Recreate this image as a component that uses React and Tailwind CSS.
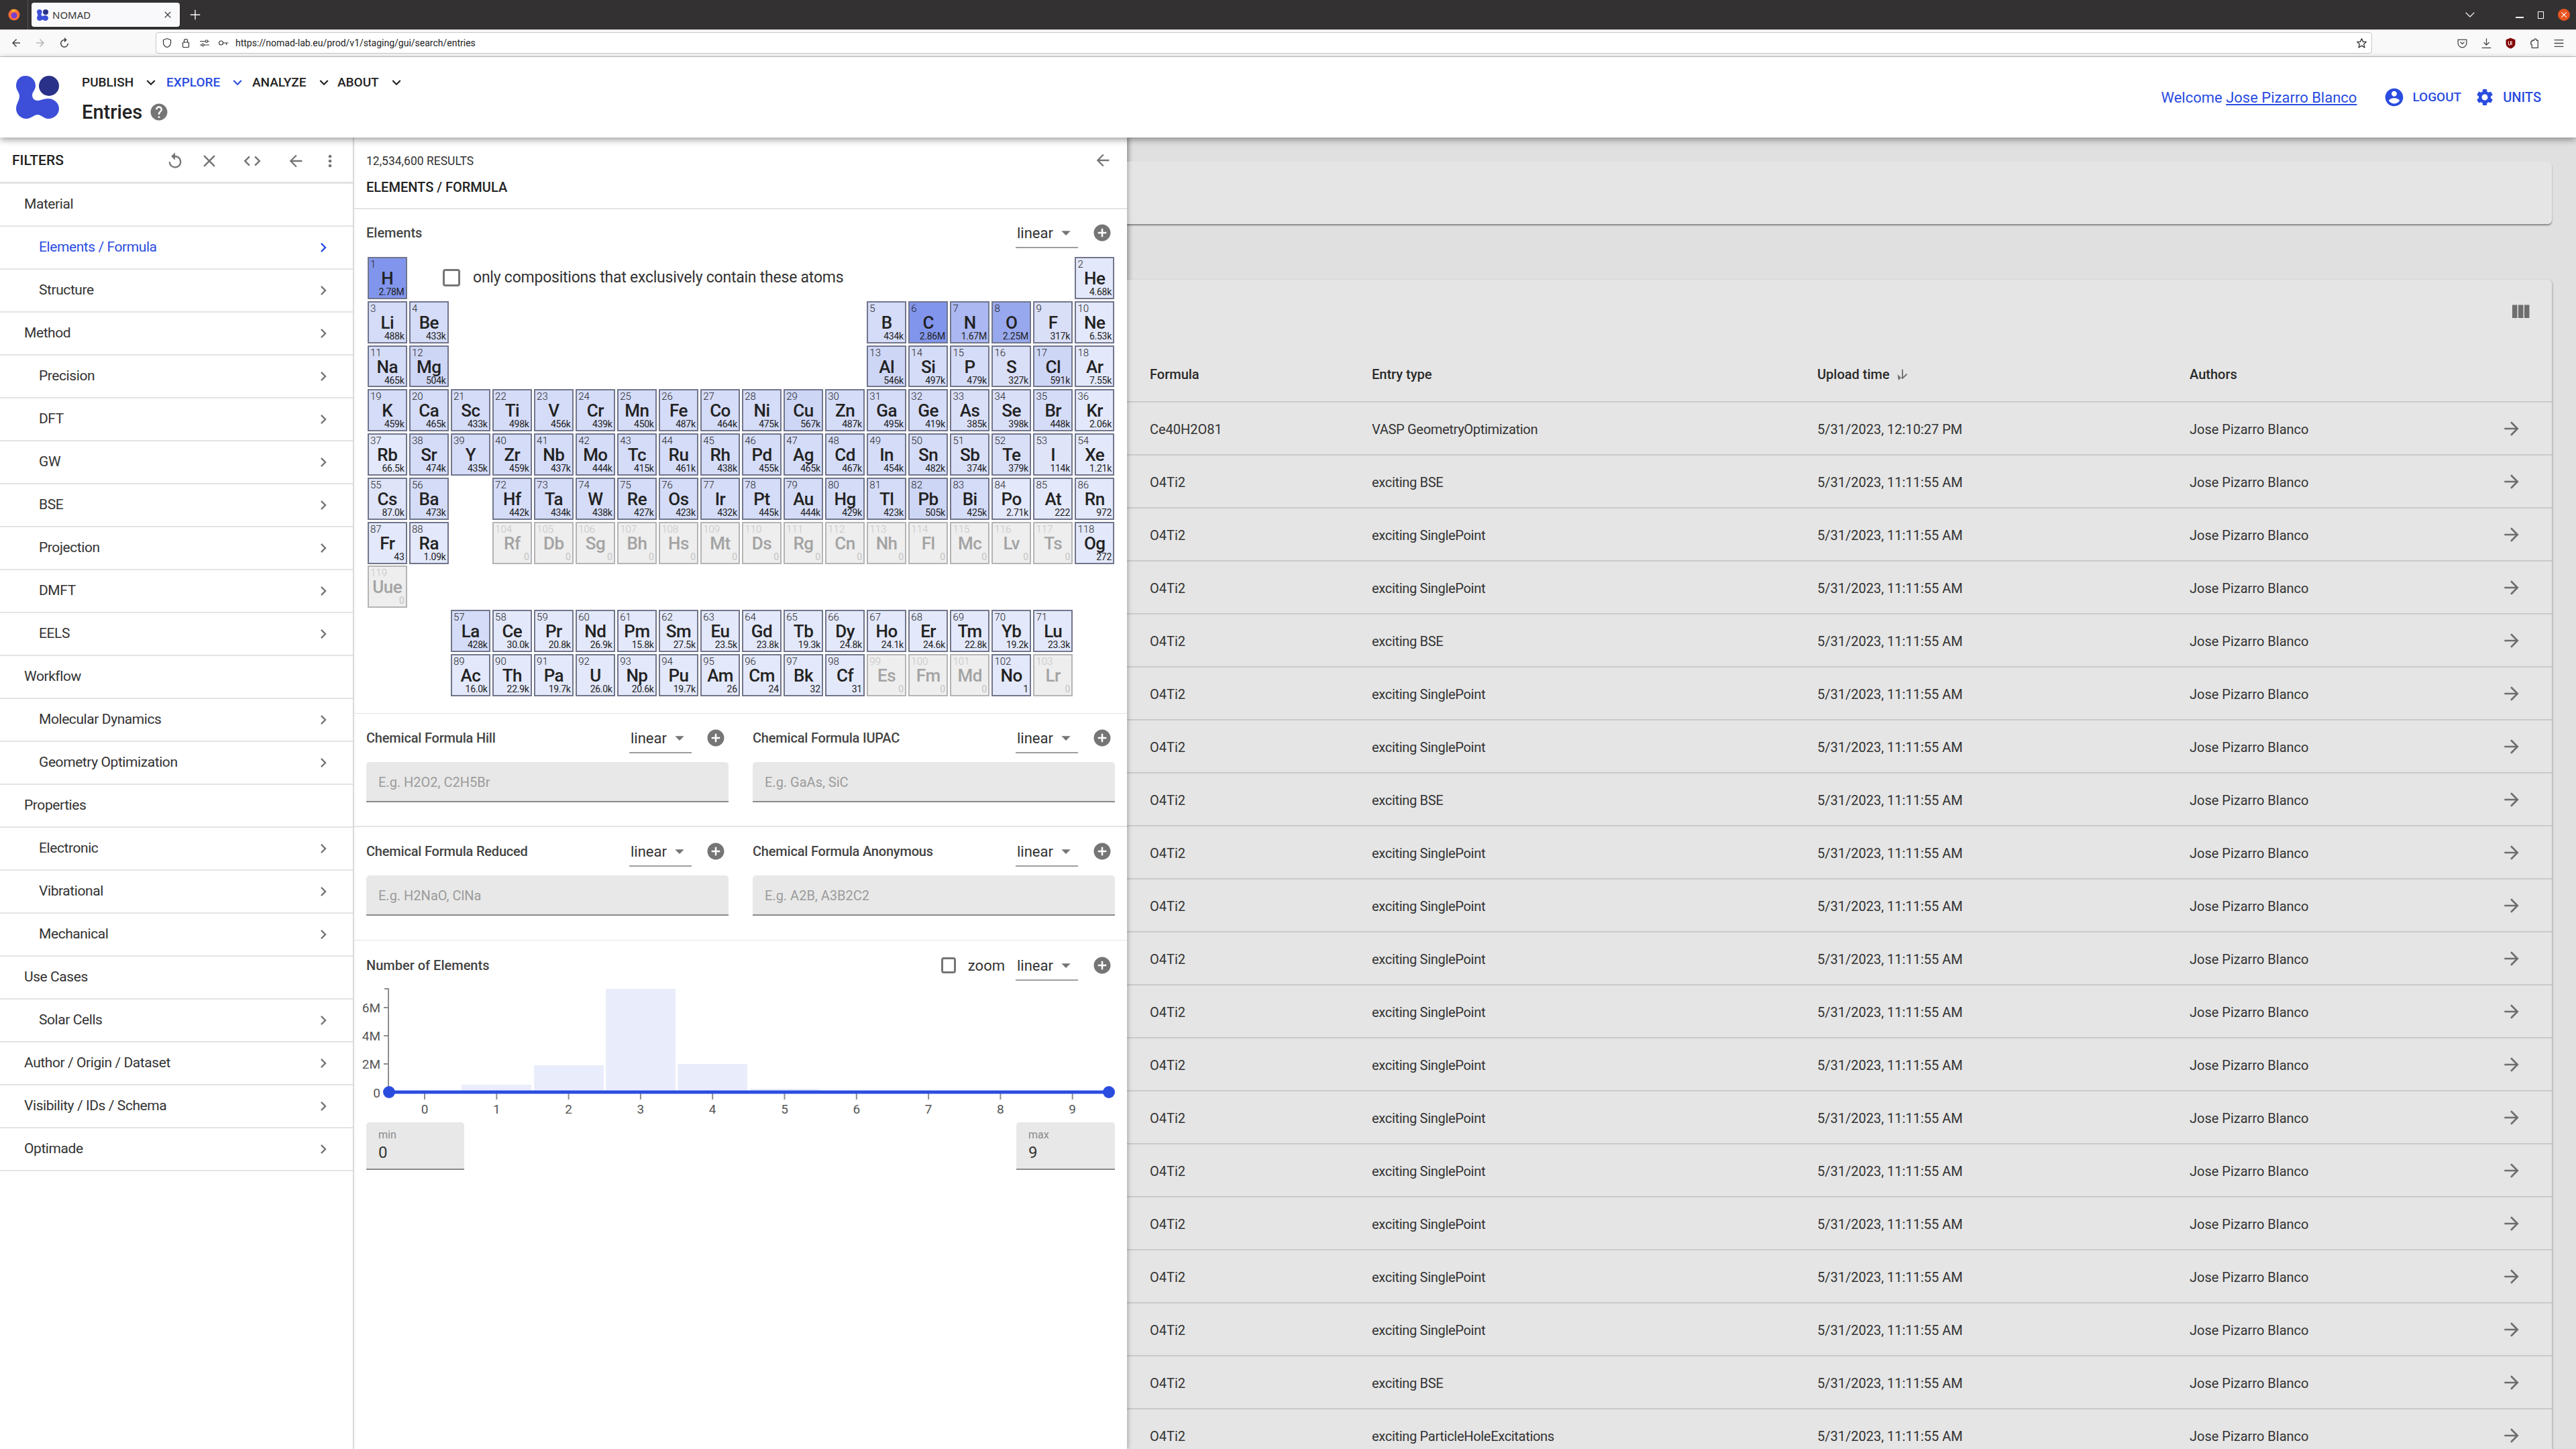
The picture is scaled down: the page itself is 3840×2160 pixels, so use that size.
import React from "react";

const P = {
  replay: "M12 5V1L7 6l5 5V7c3.31 0 6 2.69 6 6s-2.69 6-6 6-6-2.69-6-6H4c0 4.42 3.58 8 8 8s8-3.58 8-8-3.58-8-8-8z",
  clear: "M19 6.41L17.59 5 12 10.59 6.41 5 5 6.41 10.59 12 5 17.59 6.41 19 12 13.41 17.59 19 19 17.59 13.41 12z",
  code: "M9.4 16.6L4.8 12l4.6-4.6L8 6l-6 6 6 6 1.4-1.4zm5.2 0l4.6-4.6-4.6-4.6L16 6l6 6-6 6-1.4-1.4z",
  back: "M20 11H7.83l5.59-5.59L12 4l-8 8 8 8 1.41-1.41L7.83 13H20v-2z",
  forward: "M12 4l-1.41 1.41L16.17 11H4v2h12.17l-5.58 5.59L12 20l8-8z",
  more: "M12 8c1.1 0 2-.9 2-2s-.9-2-2-2-2 .9-2 2 .9 2 2 2zm0 2c-1.1 0-2 .9-2 2s.9 2 2 2 2-.9 2-2-.9-2-2-2zm0 6c-1.1 0-2 .9-2 2s.9 2 2 2 2-.9 2-2-.9-2-2-2z",
  chevron: "M10 6L8.59 7.41 13.17 12l-4.58 4.59L10 18l6-6z",
  expand: "M16.59 8.59L12 13.17 7.41 8.59 6 10l6 6 6-6z",
  drop: "M7 10l5 5 5-5z",
  add: "M12 2C6.48 2 2 6.48 2 12s4.48 10 10 10 10-4.48 10-10S17.52 2 12 2zm5 11h-4v4h-2v-4H7v-2h4V7h2v4h4v2z",
  help: "M12 2C6.48 2 2 6.48 2 12s4.48 10 10 10 10-4.48 10-10S17.52 2 12 2zm1 17h-2v-2h2v2zm2.07-7.75l-.9.92C13.45 12.9 13 13.5 13 15h-2v-.5c0-1.1.45-2.1 1.17-2.83l1.24-1.26c.37-.36.59-.86.59-1.41 0-1.1-.9-2-2-2s-2 .9-2 2H8c0-2.21 1.79-4 4-4s4 1.79 4 4c0 .88-.36 1.68-.93 2.25z",
  account: "M12 2C6.48 2 2 6.48 2 12s4.48 10 10 10 10-4.48 10-10S17.52 2 12 2zm0 3c1.66 0 3 1.34 3 3s-1.34 3-3 3-3-1.34-3-3 1.34-3 3-3zm0 14.2c-2.5 0-4.71-1.28-6-3.22.03-1.99 4-3.08 6-3.08 1.99 0 5.97 1.09 6 3.08-1.29 1.94-3.5 3.22-6 3.22z",
  settings: "M19.14 12.94c.04-.3.06-.61.06-.94 0-.32-.02-.64-.07-.94l2.03-1.58c.18-.14.23-.41.12-.61l-1.92-3.32c-.12-.22-.37-.29-.59-.22l-2.39.96c-.5-.38-1.03-.7-1.62-.94l-.36-2.54c-.04-.24-.24-.41-.48-.41h-3.84c-.24 0-.43.17-.47.41l-.36 2.54c-.59.24-1.13.57-1.62.94l-2.39-.96c-.22-.08-.47 0-.59.22L2.74 8.87c-.12.21-.08.47.12.61l2.03 1.58c-.05.3-.09.63-.09.94s.02.64.07.94l-2.03 1.58c-.18.14-.23.41-.12.61l1.92 3.32c.12.22.37.29.59.22l2.39-.96c.5.38 1.03.7 1.62.94l.36 2.54c.05.24.24.41.48.41h3.84c.24 0 .44-.17.47-.41l.36-2.54c.59-.24 1.13-.56 1.62-.94l2.39.96c.22.08.47 0 .59-.22l1.92-3.32c.12-.22.07-.47-.12-.61l-2.01-1.58zM12 15.6c-1.98 0-3.6-1.62-3.6-3.6s1.62-3.6 3.6-3.6 3.6 1.62 3.6 3.6-1.62 3.6-3.6 3.6z",
  columns: "M10 18h5V5h-5v13zm-6 0h5V5H4v13zM16 5v13h5V5h-5z",
  down: "M20 12l-1.41-1.41L13 16.17V4h-2v12.17l-5.58 5.59L4 12l8 8 8-8z",
};

function Icon({ d, className }) {
  return (
    <svg viewBox="0 0 24 24" fill="currentColor" className={className}>
      <path d={d} />
    </svg>
  );
}

function Stroke({ children, className, w = 1.4 }) {
  return (
    <svg viewBox="0 0 16 16" fill="none" stroke="currentColor" strokeWidth={w} strokeLinecap="round" strokeLinejoin="round" className={className}>
      {children}
    </svg>
  );
}

function Logo({ className }) {
  return (
    <svg viewBox="0 0 64 64" className={className}>
      <path
        fill="#3d4fd9"
        d="M14 0C22 0 29 6 29 15C29 21 24 24 24 29C24 34 28 37 32 37C37 37 40 34 48 34C57 34 64 41 64 49C64 57 57 64 48 64C41 64 38 58 32 58C26 58 23 64 15 64C7 64 0 57 0 49C0 42 5 37 5 30C5 25 0 21 0 15C0 6 6 0 14 0Z"
      />
      <ellipse cx="49" cy="15" rx="15" ry="15" fill="#2a3188" />
    </svg>
  );
}

// element rows: [start column, first Z, last Z]
const LAYOUT = [
  [[1, 1, 1], [18, 2, 2]],
  [[1, 3, 4], [13, 5, 10]],
  [[1, 11, 12], [13, 13, 18]],
  [[1, 19, 36]],
  [[1, 37, 54]],
  [[1, 55, 56], [4, 72, 86]],
  [[1, 87, 88], [4, 104, 118]],
  [[1, 119, 119]],
  [[3, 57, 71]],
  [[3, 89, 103]],
];

const SYMBOLS = "H He Li Be B C N O F Ne Na Mg Al Si P S Cl Ar K Ca Sc Ti V Cr Mn Fe Co Ni Cu Zn Ga Ge As Se Br Kr Rb Sr Y Zr Nb Mo Tc Ru Rh Pd Ag Cd In Sn Sb Te I Xe Cs Ba La Ce Pr Nd Pm Sm Eu Gd Tb Dy Ho Er Tm Yb Lu Hf Ta W Re Os Ir Pt Au Hg Tl Pb Bi Po At Rn Fr Ra Ac Th Pa U Np Pu Am Cm Bk Cf Es Fm Md No Lr Rf Db Sg Bh Hs Mt Ds Rg Cn Nh Fl Mc Lv Ts Og Uue".split(" ");

const COUNTS = "2.78M 4.68k 488k 433k 434k 2.86M 1.67M 2.25M 317k 6.53k 465k 504k 546k 497k 479k 327k 591k 7.55k 459k 465k 433k 498k 456k 439k 450k 487k 464k 475k 567k 487k 495k 419k 385k 398k 448k 2.06k 66.5k 474k 435k 459k 437k 444k 415k 461k 438k 455k 465k 467k 454k 482k 374k 379k 114k 1.21k 87.0k 473k 428k 30.0k 20.8k 26.9k 15.8k 27.5k 23.5k 23.8k 19.3k 24.8k 24.1k 24.6k 22.8k 19.2k 23.3k 442k 434k 438k 427k 423k 432k 445k 444k 429k 423k 505k 425k 2.71k 222 972 43 1.09k 16.0k 22.9k 19.7k 26.0k 20.6k 19.7k 26 24 32 31 0 0 0 1 0 0 0 0 0 0 0 0 0 0 0 0 0 0 0 272 0".split(" ");

function cellColor(count) {
  if (count === "0") return "bg-[#eeeeee] border-[#b4b4b4] text-[#a3a3a3]";
  const n = parseFloat(count) * (count.endsWith("M") ? 1000000 : count.endsWith("k") ? 1000 : 1);
  if (n > 2700000) return "bg-[#8195ec] border-[#71768c] text-[#222]";
  if (n > 2000000) return "bg-[#98a8ee] border-[#71768c] text-[#222]";
  if (n > 1000000) return "bg-[#abb8f1] border-[#71768c] text-[#222]";
  if (n >= 500000) return "bg-[#ced6f6] border-[#71768c] text-[#222]";
  if (n >= 400000) return "bg-[#d5dcf8] border-[#71768c] text-[#222]";
  if (n >= 300000) return "bg-[#dadff8] border-[#71768c] text-[#222]";
  if (n >= 80000) return "bg-[#dfe4f9] border-[#71768c] text-[#222]";
  return "bg-[#e3e8fa] border-[#71768c] text-[#222]";
}

function Element({ z, row, col }) {
  const count = COUNTS[z - 1];
  return (
    <div
      style={{ gridRow: row + 1, gridColumn: col }}
      className={`flex flex-col border-2 px-[2px] min-w-0 overflow-hidden ${cellColor(count)}`}
    >
      <div className={`text-[15px] leading-[17px] mt-[1px] font-light ${count === "0" ? "text-[#c4c4c4]" : ""}`}>{z}</div>
      <div className="text-[26px] font-medium leading-[24px] text-center tracking-[-0.02em]">{SYMBOLS[z - 1]}</div>
      <div className={`text-[14px] leading-[17px] text-right tracking-[-0.02em] ${count === "0" ? "text-[#c4c4c4]" : ""}`}>{count}</div>
    </div>
  );
}

function Select() {
  return (
    <div className="flex items-center justify-between w-[93px] h-[46px] border-b-2 border-[#9e9e9e] text-[22px] text-[#333] pl-[2px] pt-[2px]">
      <span>linear</span>
      <Icon d={P.drop} className="w-[32px] h-[32px] text-[#757575] mr-[2px]" />
    </div>
  );
}

function AddButton() {
  return <Icon d={P.add} className="w-[30px] h-[30px] text-[#757575]" />;
}

function FormulaField({ label, placeholder }) {
  return (
    <div className="flex flex-col">
      <div className="flex items-center justify-between h-[46px]">
        <span className="text-[20px] font-medium text-[#444] tracking-[-0.01em]">{label}</span>
        <div className="flex items-center gap-[21px] pr-[4px]">
          <Select />
          <AddButton />
        </div>
      </div>
      <div className="mt-[13px] h-[60px] bg-[#e8e8e8] rounded-t-[5px] border-b-2 border-[#8a8a8a] flex items-center px-[18px] pt-[2px] text-[20px] text-[#9b9b9b]">
        {placeholder}
      </div>
    </div>
  );
}

const FILTERS = [
  ["Material", 0, false],
  ["Elements / Formula", 1, true],
  ["Structure", 1, true],
  ["Method", 0, true],
  ["Precision", 1, true],
  ["DFT", 1, true],
  ["GW", 1, true],
  ["BSE", 1, true],
  ["Projection", 1, true],
  ["DMFT", 1, true],
  ["EELS", 1, true],
  ["Workflow", 0, false],
  ["Molecular Dynamics", 1, true],
  ["Geometry Optimization", 1, true],
  ["Properties", 0, false],
  ["Electronic", 1, true],
  ["Vibrational", 1, true],
  ["Mechanical", 1, true],
  ["Use Cases", 0, false],
  ["Solar Cells", 1, true],
  ["Author / Origin / Dataset", 0, true],
  ["Visibility / IDs / Schema", 0, true],
  ["Optimade", 0, true],
];

const SP = "exciting SinglePoint";
const BSE = "exciting BSE";
const ROWS = [BSE, SP, SP, BSE, SP, SP, BSE, SP, SP, SP, SP, SP, SP, SP, SP, SP, SP, BSE, "exciting ParticleHoleExcitations"];

function TableRow({ formula, type, time }) {
  return (
    <div className="grid grid-cols-[331px_664px_555px_1fr_auto] items-center h-[79px] border-b-2 border-[#cacaca] pl-[34px] pr-[44px] text-[20px] text-[#333]">
      <div className="pt-[3px]">{formula}</div>
      <div className="pt-[3px] tracking-[-0.015em]">{type}</div>
      <div className="pt-[3px]">{time}</div>
      <div className="pt-[3px]">Jose Pizarro Blanco</div>
      <Icon d={P.forward} className="w-[32px] h-[32px] text-[#6e6e6e]" />
    </div>
  );
}

function NavItem({ label, active, w }) {
  return (
    <div className={`flex items-center gap-[13px] text-[19px] font-medium ${active ? "text-[#2a4cdf]" : "text-[#222]"} ${w}`}>
      <span>{label}</span>
      <Icon d={P.expand} className={`w-[26px] h-[26px] ${active ? "text-[#2a4cdf]" : "text-[#222]"}`} />
    </div>
  );
}

function BrowserChrome() {
  return (
    <div className="font-['Noto_Sans',sans-serif]">
      <div className="h-[44px] bg-[#333131] flex items-end relative">
        <div className="w-[42px] h-full border-r border-[#555] flex items-center justify-center">
          <svg viewBox="0 0 20 20" className="w-[20px] h-[20px]">
            <circle cx="10" cy="10" r="8.5" fill="#ff7139" />
            <circle cx="10" cy="11" r="4.5" fill="#7a3fd0" />
            <path d="M6 2 C9 3 11 1 14 4 C11 4 9 5 8 7 Z" fill="#ffbd2e" />
          </svg>
        </div>
        <div className="ml-[5px] mb-[4px] w-[221px] h-[36px] bg-[#f9f9fb] rounded-[4px] flex items-center pl-[8px] pr-[10px] shadow-sm">
          <Logo className="w-[17px] h-[17px]" />
          <span className="ml-[6px] text-[15px] text-[#333] flex-1">NOMAD</span>
          <Icon d={P.clear} className="w-[16px] h-[16px] text-[#444]" />
        </div>
        <div className="self-center ml-[14px] text-white">
          <Stroke className="w-[18px] h-[18px]" w={1.2}>
            <path d="M8 2V14M2 8H14" />
          </Stroke>
        </div>
        <div className="ml-auto self-center flex items-center text-white pr-[9px]">
          <Stroke className="w-[16px] h-[16px] mr-[60px]" w={1.1}>
            <path d="M2 5L8 11L14 5" />
          </Stroke>
          <div className="w-[12px] h-[2px] bg-white mt-[8px] mr-[21px]" />
          <div className="w-[9px] h-[11px] border-[1.5px] border-white mr-[21px]" />
          <div className="w-[18px] h-[18px] rounded-full bg-[#e95420] flex items-center justify-center">
            <Icon d={P.clear} className="w-[14px] h-[14px] text-white" />
          </div>
        </div>
      </div>
      <div className="h-[41px] bg-[#f9f9fa] border-b border-[#c8c8c8] flex items-center">
        <div className="flex items-center w-[232px] pl-[15px] gap-[18px]">
          <Icon d={P.back} className="w-[18px] h-[18px] text-[#444]" />
          <Icon d={P.forward} className="w-[18px] h-[18px] text-[#b5b5b5]" />
          <Icon d={P.replay} className="w-[18px] h-[18px] text-[#444] scale-x-[-1]" />
        </div>
        <div className="w-[3304px] h-[32px] bg-white border border-[#c8c8c8] rounded-[4px] flex items-center pl-[8px] pr-[6px] text-[#333]">
          <Stroke className="w-[16px] h-[16px]" w={1.2}>
            <path d="M8 1.5L13.5 3.5V8C13.5 11 11 13.5 8 14.5C5 13.5 2.5 11 2.5 8V3.5Z" />
          </Stroke>
          <Stroke className="w-[16px] h-[16px] ml-[12px]" w={1.2}>
            <rect x="3.5" y="7" width="9" height="7.5" rx="1" />
            <path d="M5.5 7V4.5C5.5 1.5 10.5 1.5 10.5 4.5V7" />
          </Stroke>
          <Stroke className="w-[16px] h-[16px] ml-[12px]" w={1.1}>
            <path d="M1.5 5.5H9M13 5.5H14.5M1.5 11H3.5M7.5 11H14.5" />
            <circle cx="11" cy="5.5" r="1.7" />
            <circle cx="5.5" cy="11" r="1.7" />
          </Stroke>
          <Stroke className="w-[16px] h-[16px] ml-[12px]" w={1.1}>
            <circle cx="4.5" cy="8" r="3" />
            <path d="M7.5 8H15M12.5 8V10.5" />
          </Stroke>
          <span className="ml-[10px] text-[14px] text-[#222] font-['Roboto',sans-serif]">https://nomad-lab.eu/prod/v1/staging/gui/search/entries</span>
          <Stroke className="w-[17px] h-[17px] ml-auto" w={1.2}>
            <path d="M8 1.5L10 6H14.5L11 9.2L12.2 14L8 11.4L3.8 14L5 9.2L1.5 6H6Z" />
          </Stroke>
        </div>
        <div className="flex items-center ml-[126px] gap-[19px] text-[#444]">
          <Stroke className="w-[17px] h-[17px]" w={1.2}>
            <path d="M2 3H14V8C14 11 11 14 8 14C5 14 2 11 2 8Z" />
            <path d="M5.5 6.5L8 9L10.5 6.5" />
          </Stroke>
          <Stroke className="w-[17px] h-[17px]" w={1.2}>
            <path d="M8 1.5V10.5M4.5 7L8 10.5L11.5 7M2 14.5H14" />
          </Stroke>
          <svg viewBox="0 0 16 16" className="w-[17px] h-[17px]">
            <path d="M8 .5L14.5 3V9C14.5 12 11 15 8 15.5C5 15 1.5 12 1.5 9V3Z" fill="#800000" />
            <path d="M5 5V9C5 11 8 11 8 9V5M9.5 5V10.5" fill="none" stroke="#fff" strokeWidth="1" />
          </svg>
          <Stroke className="w-[17px] h-[17px]" w={1.2}>
            <path d="M4 14.5V9.5H2.5V6H4V4H7C7 1 10.5 1 10.5 4V4H12.5V14.5Z" />
          </Stroke>
          <Stroke className="w-[17px] h-[17px]" w={1.2}>
            <path d="M2 3.5H14M2 8H14M2 12.5H14" />
          </Stroke>
        </div>
      </div>
    </div>
  );
}

function Chart() {
  const ticks = [0, 1, 2, 3, 4, 5, 6, 7, 8, 9];
  const bars = [
    [142, 148],
    [250, 119],
    [357, 5],
    [464, 117],
    [572, 154],
  ];
  return (
    <svg viewBox="0 0 1116 200" className="w-[1116px] h-[200px] overflow-visible">
      {bars.map(([x, top]) => (
        <rect key={x} x={x} y={top} width="104" height={159 - top} fill="#e9edfb" />
      ))}
      <path d="M27 5H33V159" fill="none" stroke="#8e8e8e" strokeWidth="2" />
      {[
        ["6M", 33],
        ["4M", 75],
        ["2M", 117],
        ["0", 160],
      ].map(([t, y]) => (
        <g key={t}>
          <path d={`M26 ${y}H33`} stroke="#8e8e8e" strokeWidth="2" />
          <text x="21" y={y + 7} textAnchor="end" fontSize="19" fill="#555" fontFamily="Roboto, sans-serif">{t}</text>
        </g>
      ))}
      {ticks.map((t) => (
        <g key={t}>
          <path d={`M${87 + t * 107.3} 160V170`} stroke="#8e8e8e" strokeWidth="2" />
          <text x={87 + t * 107.3} y="191" textAnchor="middle" fontSize="19" fill="#555" fontFamily="Roboto, sans-serif">{t}</text>
        </g>
      ))}
      <path d="M34 159H1107" stroke="#2a4cdf" strokeWidth="5" />
      <circle cx="34" cy="159" r="9" fill="#2a4cdf" />
      <circle cx="1107" cy="159" r="9" fill="#2a4cdf" />
    </svg>
  );
}

function Sidebar() {
  return (
    <aside className="w-[528px] shrink-0 bg-white border-r-2 border-[#e4e4e4] flex flex-col">
      <div className="h-[69px] flex items-center pl-[18px] pt-[3px] border-b-[3px] border-[#e2e2e2]">
        <span className="text-[21px] font-medium text-[#222]">FILTERS</span>
        <div className="ml-auto flex items-center text-[#757575] pr-[20px]">
          <Icon d={P.replay} className="w-[28px] h-[28px]" />
          <Icon d={P.clear} className="w-[30px] h-[30px] ml-[22px]" />
          <Icon d={P.code} className="w-[30px] h-[30px] ml-[34px]" />
          <Icon d={P.back} className="w-[28px] h-[28px] ml-[36px]" />
          <Icon d={P.more} className="w-[28px] h-[28px] ml-[23px]" />
        </div>
      </div>
      {FILTERS.map(([label, level, chevron]) => {
        const active = label === "Elements / Formula";
        return (
          <div
            key={label}
            className={`h-[64px] shrink-0 flex items-center justify-between border-b-2 border-[#e4e4e4] pr-[30px] text-[21px] tracking-[-0.02em] ${level ? "pl-[58px]" : "pl-[36px]"} ${active ? "text-[#2a4cdf]" : "text-[#333]"}`}
          >
            <span>{label}</span>
            {chevron && <Icon d={P.chevron} className={`w-[28px] h-[28px] ${active ? "text-[#2a4cdf]" : "text-[#757575]"}`} />}
          </div>
        );
      })}
    </aside>
  );
}

function Panel() {
  return (
    <section className="w-[1152px] shrink-0 bg-white shadow-[2px_0_6px_rgba(0,0,0,0.25)] relative flex flex-col">
      <div className="h-[107px] border-b-2 border-[#e4e4e4] px-[18px] flex justify-between">
        <div className="pt-[24px]">
          <div className="text-[17.5px] leading-[22px] text-[#333]">12,534,600 RESULTS</div>
          <div className="mt-[16px] text-[20px] leading-[24px] font-medium text-[#222]">ELEMENTS / FORMULA</div>
        </div>
        <Icon d={P.back} className="w-[28px] h-[28px] text-[#757575] mt-[20px] mr-[4px]" />
      </div>

      <div className="h-[752px] border-b border-[#e4e4e4] pl-[20px] pr-[19px]">
        <div className="flex items-center justify-between h-[46px] mt-[12px] ml-[-2px]">
          <span className="text-[20px] font-medium text-[#444]">Elements</span>
          <div className="flex items-center gap-[21px] pr-[3px]">
            <Select />
            <AddButton />
          </div>
        </div>
        <div className="mt-[13px] grid grid-cols-[repeat(18,1fr)] grid-rows-[repeat(10,62.9px)] gap-x-[3.5px] gap-y-[2.9px]">
          {LAYOUT.flatMap((segments, row) =>
            segments.flatMap(([start, from, to]) =>
              Array.from({ length: to - from + 1 }, (_, i) => (
                <Element key={from + i} z={from + i} row={row} col={start + i} />
              ))
            )
          )}
          <div className="row-start-1 col-start-2 col-span-14 flex items-center pl-[50px] text-[23px] tracking-[-0.01em] text-[#333]">
            <div className="w-[26px] h-[26px] border-[3px] border-[#757575] rounded-[4px] mr-[19px]" />
            only compositions that exclusively contain these atoms
          </div>
        </div>
      </div>

      <div className="h-[169px] border-b-2 border-[#e4e4e4] px-[18px] pt-[13px] grid grid-cols-2 gap-x-[36px]">
        <FormulaField label="Chemical Formula Hill" placeholder="E.g. H2O2, C2H5Br" />
        <FormulaField label="Chemical Formula IUPAC" placeholder="E.g. GaAs, SiC" />
      </div>
      <div className="h-[169px] border-b border-[#e4e4e4] px-[18px] pt-[13px] grid grid-cols-2 gap-x-[36px]">
        <FormulaField label="Chemical Formula Reduced" placeholder="E.g. H2NaO, ClNa" />
        <FormulaField label="Chemical Formula Anonymous" placeholder="E.g. A2B, A3B2C2" />
      </div>

      <div className="px-[18px] pt-[14px]">
        <div className="flex items-center h-[46px]">
          <span className="text-[20px] font-medium text-[#444] mr-auto">Number of Elements</span>
          <div className="w-[22px] h-[24px] border-[3px] border-[#757575] rounded-[4px] mr-[18px]" />
          <span className="text-[22px] text-[#333] mr-[16px]">zoom</span>
          <Select />
          <div className="ml-[21px] mr-[4px] flex"><AddButton /></div>
        </div>
        <div className="mt-[7px] flex">
          <Chart />
        </div>
        <div className="flex justify-between mt-[4px]">
          <div className="w-[146px] h-[71px] bg-[#e8e8e8] rounded-t-[5px] border-b-2 border-[#8a8a8a] px-[18px] pt-[9px]">
            <div className="text-[16px] leading-[20px] text-[#8a8a8a]">min</div>
            <div className="text-[24px] leading-[32px] text-[#333]">0</div>
          </div>
          <div className="w-[147px] h-[71px] bg-[#e8e8e8] rounded-t-[5px] border-b-2 border-[#8a8a8a] px-[18px] pt-[9px]">
            <div className="text-[16px] leading-[20px] text-[#8a8a8a]">max</div>
            <div className="text-[24px] leading-[32px] text-[#333]">9</div>
          </div>
        </div>
      </div>
    </section>
  );
}

function Results() {
  return (
    <main className="flex-1 bg-[#e0e0e0] pr-[36px] pt-[36px] flex flex-col overflow-hidden shadow-[inset_8px_0_8px_-6px_rgba(0,0,0,0.2)]">
      <div className="h-[93px] shrink-0 bg-[#e5e5e5] rounded-r-[6px] shadow-[0_2px_2px_rgba(0,0,0,0.4)]" />
      <div className="mt-[83px] bg-[#e5e5e5] rounded-tr-[6px] shadow-[1px_1px_3px_rgba(0,0,0,0.25)] flex-1">
        <div className="h-[98px] flex justify-end items-start pt-[32px] pr-[29px]">
          <Icon d={P.columns} className="w-[36px] h-[36px] text-[#6e6e6e] mt-[-2px]" />
        </div>
        <div className="grid grid-cols-[331px_664px_555px_1fr] items-center h-[85px] border-b-2 border-[#cacaca] pl-[34px] pt-[2px] text-[20px] font-medium text-[#2a2a2a]">
          <div>Formula</div>
          <div>Entry type</div>
          <div className="flex items-center gap-[8px]">
            Upload time
            <Icon d={P.down} className="w-[22px] h-[22px] text-[#6e6e6e]" />
          </div>
          <div>Authors</div>
        </div>
        <TableRow formula="Ce40H2O81" type="VASP GeometryOptimization" time="5/31/2023, 12:10:27 PM" />
        {ROWS.map((type, i) => (
          <TableRow key={i} formula="O4Ti2" type={type} time="5/31/2023, 11:11:55 AM" />
        ))}
      </div>
    </main>
  );
}

export default function App() {
  return (
    <div className="w-[3840px] h-[2160px] overflow-hidden flex flex-col bg-white font-['Roboto',sans-serif]">
      <BrowserChrome />
      <header className="h-[120px] shrink-0 bg-white relative z-10 shadow-[0_3px_10px_rgba(0,0,0,0.4)] flex items-center pl-[24px] pr-[52px]">
        <Logo className="w-[64px] h-[64px]" />
        <div className="ml-[34px] flex flex-col">
          <div className="flex items-center h-[36px] mt-[2px]">
            <NavItem label="PUBLISH" w="w-[126px]" />
            <NavItem label="EXPLORE" active w="w-[128px]" />
            <NavItem label="ANALYZE" w="w-[127px]" />
            <NavItem label="ABOUT" />
          </div>
          <div className="flex items-center mt-[6px]">
            <span className="text-[29px] leading-[40px] font-medium text-[#222]">Entries</span>
            <Icon d={P.help} className="w-[30px] h-[30px] text-[#757575] ml-[10px]" />
          </div>
        </div>
        <div className="ml-auto flex items-center text-[#2a4cdf]">
          <span className="text-[22px]">
            Welcome <span className="underline">Jose Pizarro Blanco</span>
          </span>
          <Icon d={P.account} className="w-[32px] h-[32px] ml-[40px]" />
          <span className="text-[19px] font-medium ml-[11px]">LOGOUT</span>
          <Icon d={P.settings} className="w-[30px] h-[30px] ml-[20px]" />
          <span className="text-[20px] font-medium ml-[12px]">UNITS</span>
        </div>
      </header>
      <div className="flex-1 flex min-h-0">
        <Sidebar />
        <Panel />
        <Results />
      </div>
    </div>
  );
}
